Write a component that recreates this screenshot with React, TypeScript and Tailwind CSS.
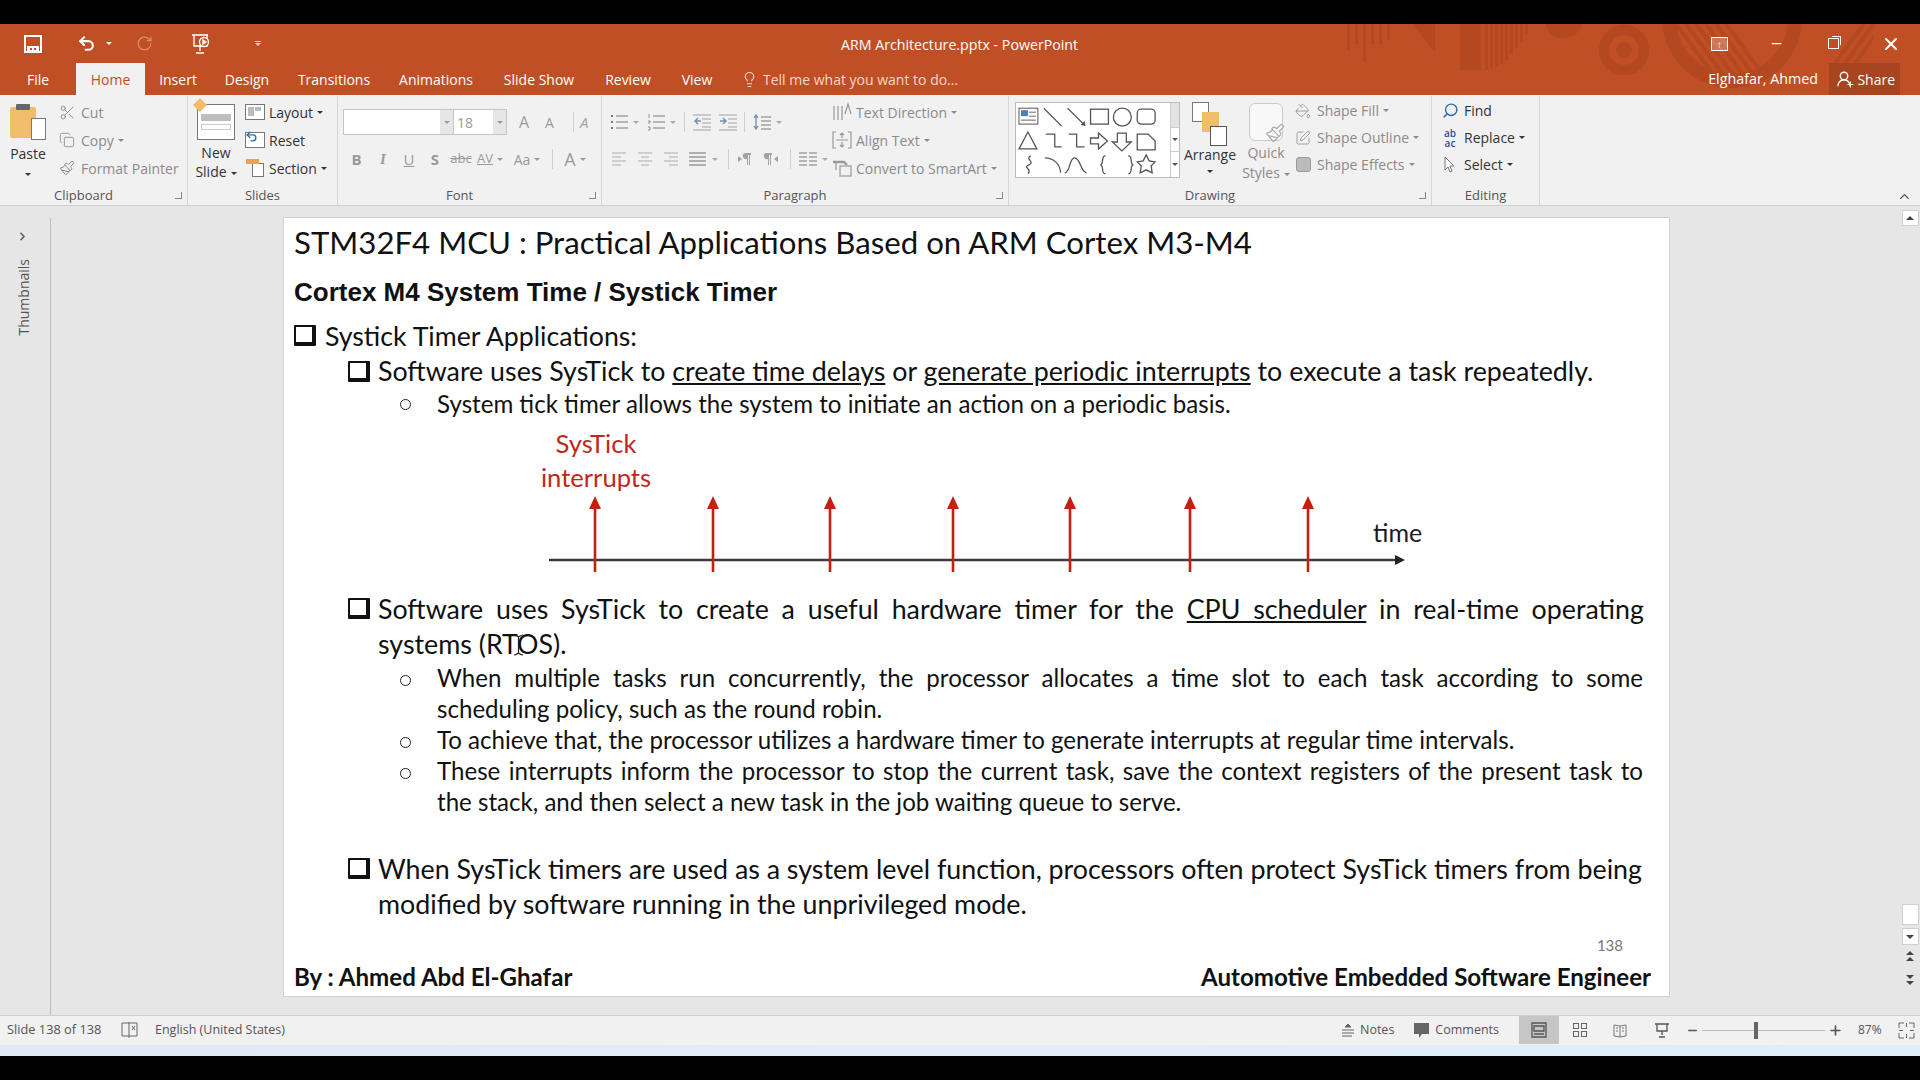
import { ReactNode } from "react";
import {
  ChevronRight,
  ChevronUp,
  Copy,
  Lightbulb,
  Minus,
  Paintbrush,
  PaintBucket,
  Plus,
  RotateCw,
  Scissors,
  Search,
  SquarePen,
  Undo2,
  UserRound,
  X,
} from "lucide-react";

const tabs: [string, number][] = [
  ["File", 76],
  ["Home", 69],
  ["Insert", 66],
  ["Design", 72],
  ["Transitions", 102],
  ["Animations", 102],
  ["Slide Show", 104],
  ["Review", 74],
  ["View", 64],
];

function Caret({ className = "" }: { className?: string }) {
  return (
    <span
      className={`inline-block h-0 w-0 border-x-[3px] border-t-[3px] border-x-transparent border-t-current align-middle ${className}`}
    />
  );
}

function Group({
  width,
  label,
  launcher,
  children,
}: {
  width: number;
  label: string;
  launcher?: boolean;
  children: ReactNode;
}) {
  return (
    <div className="flex h-full flex-col border-r border-[#d5d5d5]" style={{ width }}>
      <div className="flex h-[87px] flex-1">{children}</div>
      <div
        className={`relative h-[19px] pt-[2px] text-center text-[13px] leading-[15px] text-[#555] ${launcher ? "pr-[20px]" : ""}`}
      >
        {label}
        {launcher && (
          <span className="absolute right-[5px] top-[6px] h-[7px] w-[7px] border-b border-r border-[#888]" />
        )}
      </div>
    </div>
  );
}

function SmallRow({
  icon,
  label,
  caret,
  muted,
  tight,
}: {
  icon: ReactNode;
  label: string;
  caret?: boolean;
  muted?: boolean;
  tight?: boolean;
}) {
  return (
    <div
      className={`flex items-center whitespace-nowrap text-[14px] ${tight ? "h-[27px]" : "h-[28px]"} ${muted ? "text-[#8b8b8b]" : "text-[#333]"}`}
    >
      <span className="mr-[3px] flex w-[22px] justify-center">{icon}</span>
      {label}
      {caret && <Caret className="ml-1" />}
    </div>
  );
}

function TinyIcon({ x, children }: { x: number; children: ReactNode }) {
  return (
    <span className="flex items-center justify-center text-[#9a9a9a]" style={{ width: x }}>
      {children}
    </span>
  );
}

function Sep({ className = "" }: { className?: string }) {
  return <span className={`h-[20px] border-l border-[#cfcfcf] ${className}`} />;
}

// paragraph group icons, all drawn on the same small grid
function ParaIcon({ name, className = "" }: { name: string; className?: string }) {
  const line = "#a3a3a3";
  const paths: Record<string, ReactNode> = {
    bullets: (
      <>
        <path d="M6 3h12M6 9h12M6 15h12" stroke={line} strokeWidth="1.3" />
        <path d="M1 3h2M1 9h2M1 15h2" stroke="#777" strokeWidth="2" />
      </>
    ),
    numbers: (
      <>
        <path d="M6 3h12M6 9h12M6 15h12" stroke={line} strokeWidth="1.3" />
        <path d="M2 1v4M1 8h2v2H1M1 14h2v3H1" stroke="#888" strokeWidth="0.9" fill="none" />
      </>
    ),
    outdent: (
      <>
        <path d="M0 2h18M9 6h9M9 10h9M9 14h9M0 17h18" stroke={line} strokeWidth="1.2" />
        <path d="M8 8H2M5 5L2 8l3 3" stroke="#6f8fb0" strokeWidth="1.4" fill="none" />
      </>
    ),
    indent: (
      <>
        <path d="M0 2h18M9 6h9M9 10h9M9 14h9M0 17h18" stroke={line} strokeWidth="1.2" />
        <path d="M1 8h6M4 5l3 3-3 3" stroke="#6f8fb0" strokeWidth="1.4" fill="none" />
      </>
    ),
    spacing: (
      <>
        <path d="M8 4h10M8 8h10M8 12h10M8 16h10" stroke={line} strokeWidth="1.3" />
        <path d="M3 2v14M1 5l2-3 2 3M1 13l2 3 2-3" stroke="#6f8fb0" strokeWidth="1.3" fill="none" />
      </>
    ),
    left: <path d="M1 3h14M1 7h9M1 11h14M1 15h9" stroke="#cfcfcf" strokeWidth="2.2" />,
    center: <path d="M1 3h14M4 7h8M1 11h14M4 15h8" stroke="#cfcfcf" strokeWidth="2.2" />,
    right: <path d="M1 3h14M6 7h9M1 11h14M6 15h9" stroke="#cfcfcf" strokeWidth="2.2" />,
    justify: <path d="M0 3h17M0 7h17M0 11h17M0 15h17" stroke="#999" strokeWidth="1.3" />,
    columns: <path d="M0 3h8M0 7h8M0 11h8M0 15h8M10 3h8M10 7h8M10 11h8M10 15h8" stroke="#a3a3a3" strokeWidth="1.3" />,
    ltr: <path d="M1 6l4 3-4 3zM8 3h6v2h-1v10h-1V5h-1v10h-1V9a3 3 0 0 1-2-6z" fill="#a3a3a3" />,
    rtl: <path d="M3 3h6v2H8v10H7V5H6v10H5V9a3 3 0 0 1-2-6zM15 6l-4 3 4 3z" fill="#a3a3a3" />,
  };
  return (
    <svg width="18" height="18" viewBox="0 0 18 18" className={`shrink-0 ${className}`}>
      {paths[name]}
    </svg>
  );
}

function ShapeGallery() {
  const stroke = { fill: "none", stroke: "#555", strokeWidth: 1.3 };
  return (
    <svg width="155" height="74" viewBox="0 0 155 74">
      <rect x="3" y="5" width="19" height="16" fill="#fff" stroke="#555" />
      <rect x="5" y="7" width="7" height="6" fill="#4a7bc4" />
      <path d="M13 9h7M13 13h7M5 17h15" stroke="#666" />
      <path d="M28 5l18 18M52 5l17 17" {...stroke} />
      <path d="M70 23l-5-1 4-4z" fill="#555" />
      <rect x="75" y="6" width="18" height="15" {...stroke} />
      <circle cx="107" cy="14" r="9" {...stroke} />
      <rect x="122" y="6" width="18" height="15" rx="4" {...stroke} />
      <path d="M12 29l9 17H3zM30 31h9v13h7M53 31h8v13h8" {...stroke} />
      <path d="M75 35h8v-5l9 8-9 8v-5h-8zM102 30h9v9h5l-9.5 9-9.5-9h5zM122 31h11l7 7v9h-18z" {...stroke} />
      <path d="M15 53c-7 3 5 6-2 9s4 4-1 9M29 55c8 0 15 5 16 15M49 70c6 0 4-15 10-15s6 15 12 15" {...stroke} />
      <path d="M90 53c-5 0-1 8-5 9 4 1 0 9 5 9M113 53c5 0 1 8 5 9-4 1 0 9-5 9" {...stroke} />
      <path d="M131 52l3 6 6 1-4 4 1 7-6-3-6 3 1-7-4-4 6-1z" {...stroke} />
    </svg>
  );
}

function RibbonBar() {
  return (
    <div className="flex h-[111px] border-b border-[#d0d0d0] bg-[#f1f1f1] pt-[1px]">
      <Group width={188} label="Clipboard" launcher>
        <div className="flex w-[56px] flex-col items-center pt-[8px] text-[14px] text-[#333]">
          <div className="relative h-[36px] w-[36px]">
            <div className="absolute left-0 top-[3px] h-[31px] w-[26px] rounded-[2px] bg-[#f0bd6c]" />
            <div className="absolute left-[6px] top-0 h-[6px] w-[14px] rounded-[1px] bg-[#666]" />
            <div className="absolute bottom-0 right-0 h-[22px] w-[15px] border border-[#777] bg-white" />
          </div>
          <span className="mt-[5px] leading-[18px]">Paste</span>
          <Caret className="mt-[10px]" />
        </div>
        <div className="flex flex-col pt-[2px]">
          <SmallRow muted icon={<Scissors size={17} strokeWidth={1.3} />} label="Cut" />
          <SmallRow muted caret icon={<Copy size={16} strokeWidth={1.3} />} label="Copy" />
          <SmallRow muted icon={<Paintbrush size={16} strokeWidth={1.5} />} label="Format Painter" />
        </div>
      </Group>
      <Group width={150} label="Slides">
        <div className="flex w-[56px] flex-col items-center pt-[8px] text-[14px] text-[#333]">
          <div className="relative h-[36px] w-[38px] border border-[#777] bg-white">
            <div className="mx-[3px] mt-[9px] h-[7px] bg-[#bdbdbd]" />
            <div className="mx-[3px] mt-[3px] h-[6px] border border-[#ccc]" />
            <div className="absolute -left-[3px] -top-[5px] h-[10px] w-[10px] rotate-45 bg-[#f0bd6c]" />
          </div>
          <span className="mt-[4px] leading-[18px]">New</span>
          <span className="leading-[20px]">
            Slide
            <Caret className="ml-1" />
          </span>
        </div>
        <div className="flex flex-col pt-[2px]">
          <SmallRow
            caret
            icon={
              <span className="flex h-[16px] w-[20px] items-start gap-[1px] border border-[#777] bg-white p-[2px]">
                <span className="h-[9px] w-[6px] bg-[#bbb]" />
                <span className="h-[4px] w-[6px] bg-[#bbb]" />
              </span>
            }
            label="Layout"
          />
          <SmallRow
            icon={
              <span className="relative block h-[16px] w-[20px] border border-[#777] bg-white">
                <Undo2 size={13} strokeWidth={2.6} className="absolute -left-[1px] -top-[3px] text-[#2b6cb0]" />
              </span>
            }
            label="Reset"
          />
          <SmallRow
            caret
            icon={
              <span className="relative block h-[18px] w-[18px]">
                <span className="absolute bottom-0 right-0 h-[14px] w-[12px] border border-[#777] bg-white" />
                <span className="absolute left-0 top-0 h-[5px] w-[13px] bg-[#eea24a]" />
              </span>
            }
            label="Section"
          />
        </div>
      </Group>
      <Group width={264} label="Font" launcher>
        <div className="flex flex-col pl-[5px] pt-[13px]">
          <div className="flex h-[26px] items-center">
            <div className="flex h-[26px] w-[111px] border border-[#c5c5c5] bg-white">
              <span className="flex-1" />
              <span className="flex w-[13px] items-center justify-center bg-[#e6e6e6] text-[#999]">
                <Caret />
              </span>
            </div>
            <div className="flex h-[26px] w-[53px] items-center border-y border-r border-[#c5c5c5] bg-white pl-[3px] text-[14px] text-[#999]">
              <span className="flex-1">18</span>
              <span className="flex h-full w-[13px] items-center justify-center bg-[#e6e6e6]">
                <Caret />
              </span>
            </div>
            <span className="ml-[12px] w-[26px] text-[16px] text-[#9a9a9a]">A</span>
            <span className="w-[22px] text-[14px] text-[#9a9a9a]">A</span>
            <Sep className="mx-[6px]" />
            <span className="text-[15px] italic text-[#a5a5a5]">A</span>
          </div>
          <div className="mt-[11px] flex h-[26px] items-center text-[15px] text-[#8f8f8f]">
            <TinyIcon x={27}><b>B</b></TinyIcon>
            <TinyIcon x={26}><i style={{ fontFamily: "Liberation Serif" }} className="font-bold">I</i></TinyIcon>
            <TinyIcon x={26}><u>U</u></TinyIcon>
            <TinyIcon x={26}><b>S</b></TinyIcon>
            <TinyIcon x={26}><s className="text-[13px]">abc</s></TinyIcon>
            <TinyIcon x={32}><span className="text-[13px] underline">AV</span><Caret className="ml-1" /></TinyIcon>
            <TinyIcon x={42}><span className="text-[14px]">Aa</span><Caret className="ml-1" /></TinyIcon>
            <Sep className="mx-[4px]" />
            <TinyIcon x={36}><span className="text-[18px]">A</span><Caret className="ml-1" /></TinyIcon>
          </div>
        </div>
      </Group>
      <Group width={407} label="Paragraph" launcher>
        <div className="flex w-[229px] flex-col pt-[13px] text-[#aaa]">
          <div className="flex h-[26px] items-center pl-[8px]">
            <ParaIcon name="bullets" />
            <Caret className="ml-[5px]" />
            <ParaIcon name="numbers" className="ml-[8px]" />
            <Caret className="ml-[5px]" />
            <Sep className="ml-[8px]" />
            <ParaIcon name="outdent" className="ml-[8px]" />
            <ParaIcon name="indent" className="ml-[8px]" />
            <Sep className="ml-[7px]" />
            <ParaIcon name="spacing" className="ml-[8px]" />
            <Caret className="ml-[5px]" />
          </div>
          <div className="mt-[11px] flex h-[26px] items-center pl-[9px]">
            <ParaIcon name="left" />
            <ParaIcon name="center" className="ml-[8px]" />
            <ParaIcon name="right" className="ml-[8px]" />
            <ParaIcon name="justify" className="ml-[8px]" />
            <Caret className="ml-[5px]" />
            <Sep className="ml-[10px]" />
            <ParaIcon name="ltr" className="ml-[8px]" />
            <ParaIcon name="rtl" className="ml-[8px]" />
            <Sep className="ml-[9px]" />
            <ParaIcon name="columns" className="ml-[8px]" />
            <Caret className="ml-[5px]" />
          </div>
        </div>
        <div className="flex flex-col pt-[2px]">
          <SmallRow
            muted
            caret
            icon={
              <svg width="20" height="20" viewBox="0 0 20 20" fill="none" stroke="#999" strokeWidth="1.2">
                <path d="M2 4v14M6 4v14M10 4v14M13 12l3-10 3 10" />
              </svg>
            }
            label="Text Direction"
          />
          <SmallRow
            muted
            caret
            icon={
              <svg width="20" height="20" viewBox="0 0 20 20" fill="none" stroke="#999" strokeWidth="1.2">
                <path d="M4 2H1v16h3M16 2h3v16h-3M4 10h12M10 3v5M8 5l2-2 2 2M10 17v-5M8 15l2 2 2-2" />
              </svg>
            }
            label="Align Text"
          />
          <SmallRow
            muted
            caret
            icon={
              <svg width="20" height="18" viewBox="0 0 20 18" fill="none" stroke="#999" strokeWidth="1.2">
                <path d="M1 3h11l3 3" strokeWidth="2.4" />
                <path d="M4 4v7" />
                <rect x="8" y="7" width="11" height="10" />
              </svg>
            }
            label="Convert to SmartArt"
          />
        </div>
      </Group>
      <Group width={423} label="Drawing" launcher>
        <div className="ml-[6px] mt-[6px] flex h-[76px] w-[165px] border border-[#bdbdbd] bg-white">
          <ShapeGallery />
          <div className="flex w-[9px] flex-col border-l border-[#ccc] text-[#555]">
            <span className="h-[25px] border-b border-[#ccc] bg-[#e3e3e3]" />
            <span className="flex h-[24px] items-center justify-center border-b border-[#ccc]"><Caret /></span>
            <span className="flex flex-1 items-center justify-center"><Caret /></span>
          </div>
        </div>
        <div className="flex w-[60px] flex-col items-center pt-[6px] text-[14px] text-[#333]">
          <div className="relative h-[44px] w-[38px]">
            <span className="absolute left-[1px] top-0 h-[20px] w-[17px] border border-[#777] bg-white" />
            <span className="absolute left-[11px] top-[10px] h-[20px] w-[17px] bg-[#f0bd6c]" />
            <span className="absolute left-[19px] top-[24px] h-[20px] w-[17px] border border-[#555] bg-white" />
          </div>
          <span className="leading-[18px]">Arrange</span>
          <Caret className="mt-[6px]" />
        </div>
        <div className="flex w-[52px] flex-col items-center pt-[7px] text-[14px] text-[#8b8b8b]">
          <div className="relative h-[38px] w-[34px] rounded-[6px] border border-[#ccc] bg-[#f8f8f8]">
            <Paintbrush size={20} strokeWidth={1.4} className="absolute -bottom-[3px] -right-[3px] text-[#aaa]" />
          </div>
          <span className="mt-[2px] leading-[20px]">Quick</span>
          <span className="leading-[19px]">
            Styles
            <Caret className="ml-1" />
          </span>
        </div>
        <div className="flex flex-col pt-[1px]">
          <SmallRow muted caret tight icon={<PaintBucket size={16} strokeWidth={1.2} />} label="Shape Fill" />
          <SmallRow muted caret tight icon={<SquarePen size={16} strokeWidth={1.2} />} label="Shape Outline" />
          <SmallRow
            muted
            caret
            tight
            icon={<span className="h-[15px] w-[15px] rounded-[3px] border border-[#999] bg-[#bbb]" />}
            label="Shape Effects"
          />
        </div>
      </Group>
      <Group width={108} label="Editing">
        <div className="flex flex-col pl-[7px] pt-[1px]">
          <SmallRow tight icon={<Search size={17} strokeWidth={2} className="-scale-x-100 text-[#2b6cb0]" />} label="Find" />
          <SmallRow
            caret
            tight
            icon={
              <span className="text-center text-[10px] font-semibold leading-[10px] text-[#2b4f9e]">
                ab
                <br />
                ac
              </span>
            }
            label="Replace"
          />
          <SmallRow
            caret
            tight
            icon={
              <svg width="14" height="18" viewBox="0 0 14 18" fill="#fff" stroke="#777">
                <path d="M2 1v13l3-3 2 5 2-1-2-5h4z" />
              </svg>
            }
            label="Select"
          />
        </div>
      </Group>
      <div className="flex flex-1 items-end justify-end pb-[1px] pr-[8px] text-[#555]">
        <ChevronUp size={15} strokeWidth={2.2} />
      </div>
    </div>
  );
}

function TitleArt() {
  const dark = "#b44820";
  return (
    <svg className="absolute left-[1340px] top-0" width="560" height="71" viewBox="0 0 560 71" fill={dark}>
      <defs>
        <clipPath id="ring">
          <circle cx="392" cy="-6" r="60" />
        </clipPath>
      </defs>
      <path d="M7 0h3v27H7zM15 0h3v20h-3zM23 0h3v37h-3zM31 0h3v20h-3zM39 0h3v20h-3zM47 0h3v16h-3zM72 0l23 28V0z" />
      <path d="M120 0h21v46h-21zM145 0h3v46h-3zM150 0h3v44h-3zM155 0h3v42h-3zM160 0h3v40h-3zM165 0h3v36h-3zM170 0h3v30h-3zM175 0h3v24h-3zM180 0h3v18h-3zM185 0h3v10h-3z" />
      <path d="M206 0c2 19 32 19 36 0z" />
      <path fillRule="evenodd" d="M284 1a25 25 0 1 0 .1 0zM284 11a15 15 0 1 1-.1 0z" />
      <circle cx="284" cy="26" r="8" />
      <circle cx="392" cy="-6" r="63" fill="none" stroke={dark} strokeWidth="14" />
      <g clipPath="url(#ring)" stroke={dark} strokeWidth="4">
        <path d="M336 0l44 60M346 0l44 60M356 0l44 60M366 0l44 60M376 0l44 60M386 0l44 60" />
      </g>
      <path d="M493 39l28-39h5l-28 39zM503 39l28-39h5l-28 39zM513 39l21-30v6L518 39z" />
    </svg>
  );
}

function TitleBar() {
  return (
    <div className="relative h-[71px] bg-[#c14f25] text-white">
      <TitleArt />
      <div className="relative flex h-[39px] items-center">
        <svg width="18" height="18" viewBox="0 0 18 18" className="ml-[24px]">
          <path d="M1 1h16v16H1z" fill="none" stroke="#fff" strokeWidth="2" />
          <path d="M3 11h12v5H3z" fill="#fff" />
          <path d="M6 13h2v2H6zM10 13h2v2h-2z" fill="#c14f25" />
        </svg>
        <Undo2 size={19} strokeWidth={2.6} className="ml-[35px]" />
        <Caret className="ml-[10px]" />
        <RotateCw size={17} strokeWidth={1.6} className="ml-[24px] text-[#dc8f6f]" />
        <svg width="20" height="22" viewBox="0 0 20 22" fill="none" stroke="#fff" strokeWidth="1.4" className="ml-[38px]">
          <path d="M1 2h16M3 2v11h13V2M9 13v5M5 20h8" />
          <circle cx="13" cy="9" r="4.5" fill="#c14f25" />
          <path d="M12 7l3 2-3 2z" fill="#fff" />
        </svg>
        <span className="ml-[44px] flex flex-col items-center gap-[1px]">
          <span className="h-[1px] w-[6px] bg-[#f0c8b5]" />
          <Caret className="text-[#f0c8b5]" />
        </span>
        <span className="absolute left-[841px] top-[9px] whitespace-nowrap text-[14.2px] leading-[24px]">
          ARM Architecture.pptx - PowerPoint
        </span>
        <div className="ml-auto flex items-center pr-[19px]">
          <span className="flex h-[14px] w-[17px] items-center justify-center border border-white bg-white/25 text-[10px] leading-none">
            ↑
          </span>
          <Minus size={15} className="ml-[41px]" strokeWidth={2} />
          <span className="relative ml-[44px] block h-[11px] w-[11px] border border-white">
            <span className="absolute -right-[3px] -top-[3px] h-[9px] w-[9px] border-r border-t border-white" />
          </span>
          <X size={20} strokeWidth={2.4} className="ml-[42px]" />
        </div>
      </div>
      <div className="relative flex h-[32px] items-end text-[14px]">
        {tabs.map(([name, width]) => (
          <div
            key={name}
            style={{ width }}
            className={`flex h-[32px] items-center justify-center ${name === "Home" ? "bg-[#f1f1f1] text-[#c14f25]" : ""}`}
          >
            {name}
          </div>
        ))}
        <div className="ml-[12px] flex h-[32px] items-center text-[#f5d9cc]">
          <Lightbulb size={17} strokeWidth={1.5} className="mr-[5px]" />
          Tell me what you want to do...
        </div>
        <div className="ml-auto flex h-[32px] items-center pr-[20px]">
          <span className="mr-[11px] text-[14.3px]">Elghafar, Ahmed</span>
          <span className="flex h-[32px] w-[71px] items-center justify-end bg-[#a94420] pr-[5px]">
            <span className="relative mr-[4px] block h-[18px] w-[18px]">
              <UserRound size={18} strokeWidth={1.8} />
              <Plus size={9} strokeWidth={2.4} className="absolute -bottom-[1px] -right-[2px]" />
            </span>
            Share
          </span>
        </div>
      </div>
    </div>
  );
}

function BoxBullet({ className = "" }: { className?: string }) {
  return (
    <span
      className={`inline-block h-[21px] w-[22px] shrink-0 rounded-[1px] border-[2px] border-b-[4px] border-r-[4px] border-[#111] ${className}`}
    />
  );
}

function DotBullet() {
  return (
    <span className="ml-[106px] mt-[13px] inline-block h-[11px] w-[11px] shrink-0 rounded-full border-[1.5px] border-[#222]" />
  );
}

function Diagram() {
  const ticks = [594, 712, 829, 952, 1069, 1189, 1307];
  return (
    <div className="relative h-[170px] w-full">
      <svg className="absolute left-0 top-0" width="1386" height="170" viewBox="0 0 1386 170">
        <line x1="265" x2="1117" y1="138" y2="138" stroke="#3a3a3a" strokeWidth="2.6" />
        <path d="M1121 138l-10-5v10z" fill="#222" />
        {ticks.map((t) => (
          <g key={t}>
            <line x1={t - 283} x2={t - 283} y1="86" y2="150" stroke="#c5200f" strokeWidth="2.6" />
            <path d={`M${t - 283} 74l-6 13h12z`} fill="#c5200f" />
          </g>
        ))}
      </svg>
      <div className="absolute left-[234px] top-[4px] w-[156px] text-center text-[25.6px] leading-[34px] text-[#c0281a]">
        SysTick
        <br />
        interrupts
      </div>
      <div className="absolute left-[1089px] top-[93px] text-[25px] leading-[34px] text-[#1a1a26]">time</div>
    </div>
  );
}

function Slide() {
  return (
    <div
      className="-mt-[1px] h-[780px] w-[1387px] border border-[#d2d2d2] bg-white px-[10px] text-[#111]"
      style={{ fontFamily: '"Lato", "Open Sans", sans-serif' }}
    >
      <div className="-mt-[1px] h-[51px] whitespace-nowrap text-[31.2px] leading-[50px]">
        STM32F4 MCU : Practical Applications Based on ARM Cortex M3-M4
      </div>
      <div
        className="h-[48px] whitespace-nowrap text-[26px] font-bold leading-[48px]"
        style={{ fontFamily: '"Liberation Sans", sans-serif' }}
      >
        Cortex M4 System Time / Systick Timer
      </div>
      <div className="-mt-[1px] flex h-[41px] items-center text-[26.7px] leading-[40px]">
        <BoxBullet className="mr-[9px]" />
        Systick Timer Applications:
      </div>
      <div className="ml-[54px] flex h-[30px] items-center whitespace-nowrap text-[26.8px] leading-[30px]">
        <BoxBullet className="mr-[8px]" />
        <span>
          Software uses SysTick to <u>create time delays</u> or <u>generate periodic interrupts</u> to execute a task
          repeatedly.
        </span>
      </div>
      <div className="flex h-[36px] text-[24.1px] leading-[36px]">
        <DotBullet />
        <span className="ml-[26px] whitespace-nowrap">
          System tick timer allows the system to initiate an action on a periodic basis.
        </span>
      </div>
      <div className="-mx-[10px]">
        <Diagram />
      </div>
      <div className="ml-[54px] flex text-[26.8px] leading-[35px]">
        <BoxBullet className="mr-[8px] mt-[6px]" />
        <p className="w-[1266px] text-justify">
          Software uses SysTick to create a useful hardware timer for the <u>CPU scheduler</u> in real-time operating
          systems (RTOS).
        </p>
      </div>
      <div className="text-[24.1px] leading-[31px]">
        <div className="flex">
          <DotBullet />
          <p className="ml-[26px] w-[1206px] text-justify">
            When multiple tasks run concurrently, the processor allocates a time slot to each task according to some
            scheduling policy, such as the round robin.
          </p>
        </div>
        <div className="flex whitespace-nowrap">
          <DotBullet />
          <p className="ml-[26px]">
            To achieve that, the processor utilizes a hardware timer to generate interrupts at regular time intervals.
          </p>
        </div>
        <div className="flex">
          <DotBullet />
          <p className="ml-[26px] w-[1206px] text-justify">
            These interrupts inform the processor to stop the current task, save the context registers of the present
            task to the stack, and then select a new task in the job waiting queue to serve.
          </p>
        </div>
      </div>
      <div className="ml-[54px] mt-[35px] flex text-[26.8px] leading-[35px]">
        <BoxBullet className="mr-[8px] mt-[6px]" />
        <p className="w-[1266px]">
          When SysTick timers are used as a system level function, processors often protect SysTick timers from being
          modified by software running in the unprivileged mode.
        </p>
      </div>
      <div className="mt-[9px] h-[28px] pr-[36px] text-right text-[15px] leading-[28px] text-[#777]">138</div>
      <div className="flex h-[36px] items-center justify-between pr-[8px] text-[24.1px] font-bold">
        <span>By : Ahmed Abd El-Ghafar</span>
        <span>Automotive Embedded Software Engineer</span>
      </div>
    </div>
  );
}

function Triangle({ up }: { up?: boolean }) {
  return (
    <span
      className={`h-0 w-0 border-x-[4px] border-x-transparent ${up ? "border-b-[4px] border-b-[#444]" : "border-t-[4px] border-t-[#444]"}`}
    />
  );
}

function ScrollBar() {
  const box = "flex w-[17px] items-center justify-center border border-[#d0d0d0] bg-white";
  return (
    <div className="-mt-[8px] ml-auto mr-[1px] flex w-[18px] flex-col items-center">
      <div className={`${box} h-[16px]`}>
        <Triangle up />
      </div>
      <div className="flex-1" />
      <div className={`${box} h-[21px]`} />
      <div className={`${box} mt-[3px] h-[17px]`}>
        <Triangle />
      </div>
      <div className="mt-[6px] flex flex-col items-center gap-[2px]">
        <Triangle up />
        <Triangle up />
      </div>
      <div className="mb-[30px] mt-[14px] flex flex-col items-center gap-[2px]">
        <Triangle />
        <Triangle />
      </div>
    </div>
  );
}

function StatusBar() {
  return (
    <div className="flex h-[30px] items-center border-t border-[#cfcfcf] bg-[#f1f1f1] pb-[1px] text-[12.5px] text-[#555]">
      <span className="ml-[7px] w-[101px] text-[12.8px]">Slide 138 of 138</span>
      <svg width="18" height="18" viewBox="0 0 18 18" fill="none" stroke="#666" className="ml-[13px]">
        <path d="M8 2H1v13h7M8 1v16M8 2h8v13H8M11 5l3 4M14 5l-3 4" />
      </svg>
      <span className="ml-[16px]">English (United States)</span>
      <div className="ml-auto flex h-full items-center">
        <svg width="14" height="14" viewBox="0 0 14 14" stroke="#666" fill="#666">
          <path d="M7 1l3 3H4z" />
          <path d="M1 7h12M1 10h12M1 13h10" />
        </svg>
        <span className="ml-[5px]">Notes</span>
        <svg width="15" height="15" viewBox="0 0 15 15" fill="#666" className="ml-[20px]">
          <path d="M0 0h15v11H8l-3 4v-4H0z" />
        </svg>
        <span className="ml-[6px]">Comments</span>
        <span className="ml-[20px] flex h-full w-[40px] items-center justify-center bg-[#c6c6c6]">
          <svg width="16" height="16" viewBox="0 0 16 16" fill="none" stroke="#555" strokeWidth="1.3">
            <path d="M1 1h14v14H1zM3 4h10v5H3zM3 12h10" />
          </svg>
        </span>
        <span className="flex w-[41px] justify-center">
          <span className="grid grid-cols-2 gap-[2px]">
            <span className="h-[6px] w-[6px] border border-[#666]" />
            <span className="h-[6px] w-[6px] border border-[#666]" />
            <span className="h-[6px] w-[6px] border border-[#666]" />
            <span className="h-[6px] w-[6px] border border-[#666]" />
          </span>
        </span>
        <span className="flex w-[41px] justify-center">
          <svg width="15" height="15" viewBox="0 0 15 15" fill="none" stroke="#777">
            <path d="M1 2l6 1 6-1v11l-6 1-6-1zM7 3v11M3 5h2M3 8h2M9 5h2M9 8h2" />
          </svg>
        </span>
        <span className="flex w-[41px] justify-center">
          <svg width="16" height="16" viewBox="0 0 16 16" fill="none" stroke="#555" strokeWidth="1.3">
            <path d="M1 2h14M3 2v7h10V2M8 9v4M5 15h6" />
          </svg>
        </span>
        <Minus size={13} strokeWidth={2.6} className="ml-[4px]" />
        <span className="relative mx-[3px] block h-[1px] w-[123px] bg-[#bbb]">
          <span className="absolute left-[52px] -top-[8px] h-[17px] w-[4px] bg-[#666]" />
        </span>
        <Plus size={15} strokeWidth={2.6} />
        <span className="ml-[15px] w-[40px] text-[12px]">87%</span>
        <svg width="17" height="17" viewBox="0 0 17 17" fill="none" stroke="#666" className="mr-[5px]">
          <path d="M1 1h5M11 1h5v5M16 11v5h-5M6 16H1v-5M1 6V1M8.5 1v4M8.5 12v4M1 8.5h4M12 8.5h4" />
        </svg>
      </div>
    </div>
  );
}

export default function App() {
  return (
    <div
      className="flex h-[1080px] w-[1920px] flex-col overflow-hidden bg-black"
      style={{ fontFamily: '"Open Sans", "Noto Sans", sans-serif' }}
    >
      <div className="h-[24px] shrink-0" />
      <TitleBar />
      <RibbonBar />
      <div className="h-[12px] shrink-0 bg-[#e6e6e6]" />
      <div className="relative flex h-[797px] shrink-0 bg-[#e6e6e6]">
        <div className="flex w-[51px] flex-col items-start border-r border-[#bdbdbd] pl-[17px] pt-[10px] text-[#555]">
          <ChevronRight size={13} strokeWidth={2.6} className="-ml-[1px] mt-[2px]" />
          <span
            className="mt-[16px] -ml-[2px] rotate-180 text-[14px] leading-[18px]"
            style={{ writingMode: "vertical-rl" }}
          >
            Thumbnails
          </span>
        </div>
        <div className="ml-[232px]">
          <Slide />
        </div>
        <ScrollBar />
        {/* text cursor sitting over the slide */}
        <svg
          className="absolute left-[513px] top-[416px]"
          width="11"
          height="22"
          viewBox="0 0 11 22"
          fill="none"
          stroke="#222"
          strokeWidth="1.2"
        >
          <path d="M1 1c2 0 3 1 4.5 2C7 2 8 1 10 1M5.5 3v16M1 21c2 0 3-1 4.5-2 1.500 1 2.500 2 4.500 2" />
        </svg>
      </div>
      <StatusBar />
      <div className="h-[11px] shrink-0 bg-gradient-to-r from-[#dfeaf6] via-[#e4ecf8] to-[#dfeef8]" />
    </div>
  );
}
